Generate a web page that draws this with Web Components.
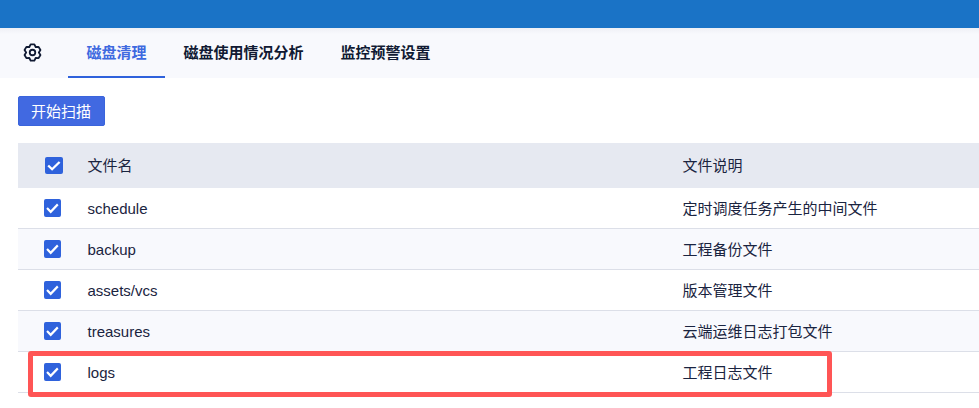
<!DOCTYPE html>
<html lang="zh">
<head>
<meta charset="utf-8">
<title>磁盘清理</title>
<style>
  html, body { margin: 0; height: 100%; }
  body {
    overflow: hidden;
    background: #fff;
    color: #1a2440;
    font: 15px "Liberation Sans", "Noto Sans CJK SC", sans-serif;
  }
</style>
</head>
<body>
<disk-page>
  <nav-tabs slot="nav">
    <nav-tab active>磁盘清理</nav-tab>
    <nav-tab>磁盘使用情况分析</nav-tab>
    <nav-tab>监控预警设置</nav-tab>
  </nav-tabs>
  <scan-button slot="action">开始扫描</scan-button>
  <file-table slot="table">
    <file-row header name="文件名" note="文件说明"></file-row>
    <file-row name="schedule" note="定时调度任务产生的中间文件"></file-row>
    <file-row striped name="backup" note="工程备份文件"></file-row>
    <file-row name="assets/vcs" note="版本管理文件"></file-row>
    <file-row striped name="treasures" note="云端运维日志打包文件"></file-row>
    <file-row name="logs" note="工程日志文件"></file-row>
  </file-table>
</disk-page>

<script>
(function () {
  function define_element(tag, markup, extra) {
    class Element extends HTMLElement {
      constructor() {
        super();
        this.attachShadow({mode: "open"}).innerHTML = markup;
      }
      connectedCallback() {
        if (extra) extra(this);
      }
    }
    customElements.define(tag, Element);
  }

  define_element("disk-page", `
    <style>
      :host { display: block; position: relative; height: 408px; overflow: hidden; }
      .top { height: 28px; background: #1a73c6; }
      .bar { display: flex; height: 50px; background: linear-gradient(#eef0f5, #f8f9fd 6px); }
      .icon { width: 68px; display: flex; align-items: center; justify-content: center; padding: 0 3px 1px 0; box-sizing: border-box; }
      .action { display: flex; padding: 18px 18px 17px; }
      .table { display: block; padding-left: 18px; }
      .mark {
        position: absolute; left: 28px; top: 351px; width: 804px; height: 46px;
        box-sizing: border-box; border: 5px solid #ff5555; border-radius: 3px;
      }
    </style>
    <div class="top"></div>
    <div class="bar">
      <div class="icon">
        <svg width="19" height="19" viewBox="0 0 24 24" fill="none" stroke="#101a33" stroke-width="2.300" stroke-linejoin="round">
          <path d="M9.640 1.770L14.360 1.770 16 5.070 19.680 4.840 22.040 8.930 20 12 22.040 15.070 19.680 19.160 16 18.930 14.360 22.230 9.640 22.230 8 18.930 4.320 19.160 1.960 15.070 4 12 1.960 8.930 4.320 4.840 8 5.070z"/>
          <circle cx="12" cy="12" r="3.500"/>
        </svg>
      </div>
      <slot name="nav"></slot>
    </div>
    <div class="action"><slot name="action"></slot></div>
    <div class="table"><slot name="table"></slot></div>
    <div class="mark"></div>
  `);

  define_element("nav-tabs", `
    <style>:host { display: flex; height: 50px; }</style>
    <slot></slot>
  `);

  define_element("nav-tab", `
    <style>
      :host {
        display: flex; align-items: center; box-sizing: border-box; height: 50px;
        padding: 0 18.500px 1px; font-weight: 700; font-size: 15px; color: #101a33;
        border-bottom: 2px solid transparent;
      }
      :host([active]) { color: #3f6ae0; border-bottom-color: #2f62dc; }
    </style>
    <slot></slot>
  `);

  define_element("scan-button", `
    <style>
      :host {
        display: flex; align-items: center; justify-content: center; box-sizing: border-box;
        width: 87px; height: 30px; padding: 0 1px 2px 0; background: #4169e1; color: #fff; font-size: 15px;
        border: 1px solid #3a64dc; border-radius: 2px;
      }
    </style>
    <slot></slot>
  `);

  define_element("file-table", `
    <style>:host { display: block; }</style>
    <slot></slot>
  `);

  define_element("check-box", `
    <style>
      :host { display: block; width: 17px; height: 18px; }
      :host([large]) { width: 18px; height: 17px; }
      svg { display: block; width: 100%; height: 100%; }
    </style>
    <svg viewBox="0 0 18 18" preserveAspectRatio="none">
      <rect width="18" height="18" rx="2" fill="#2f62dc"/>
      <path d="M3.200 9l3.900 3.900 7.500-7.500" fill="none" stroke="#fff" stroke-width="2.300"/>
    </svg>
  `);

  define_element("file-row", `
    <style>
      :host {
        display: grid; grid-template-columns: 69.500px 595px 1fr; align-items: center;
        height: 41px; box-sizing: border-box; border-bottom: 1px solid #dcdfe8;
      }
      :host([striped]) { background: #f8f9fd; }
      :host([header]) { height: 45px; background: #e6e9f1; border-bottom: 0; }
      check-box { margin-left: 26px; }
      :host([header]) check-box { margin-left: 27px; }
      .note { padding-bottom: 2px; }
      :host([header]) .name { padding-bottom: 2px; }
    </style>
    <check-box></check-box>
    <span class="name"></span>
    <span class="note"></span>
  `, function (row) {
    row.shadowRoot.querySelector(".name").textContent = row.getAttribute("name");
    row.shadowRoot.querySelector(".note").textContent = row.getAttribute("note");
    if (row.hasAttribute("header")) row.shadowRoot.querySelector("check-box").setAttribute("large", "");
  });
})();
</script>
</body>
</html>
